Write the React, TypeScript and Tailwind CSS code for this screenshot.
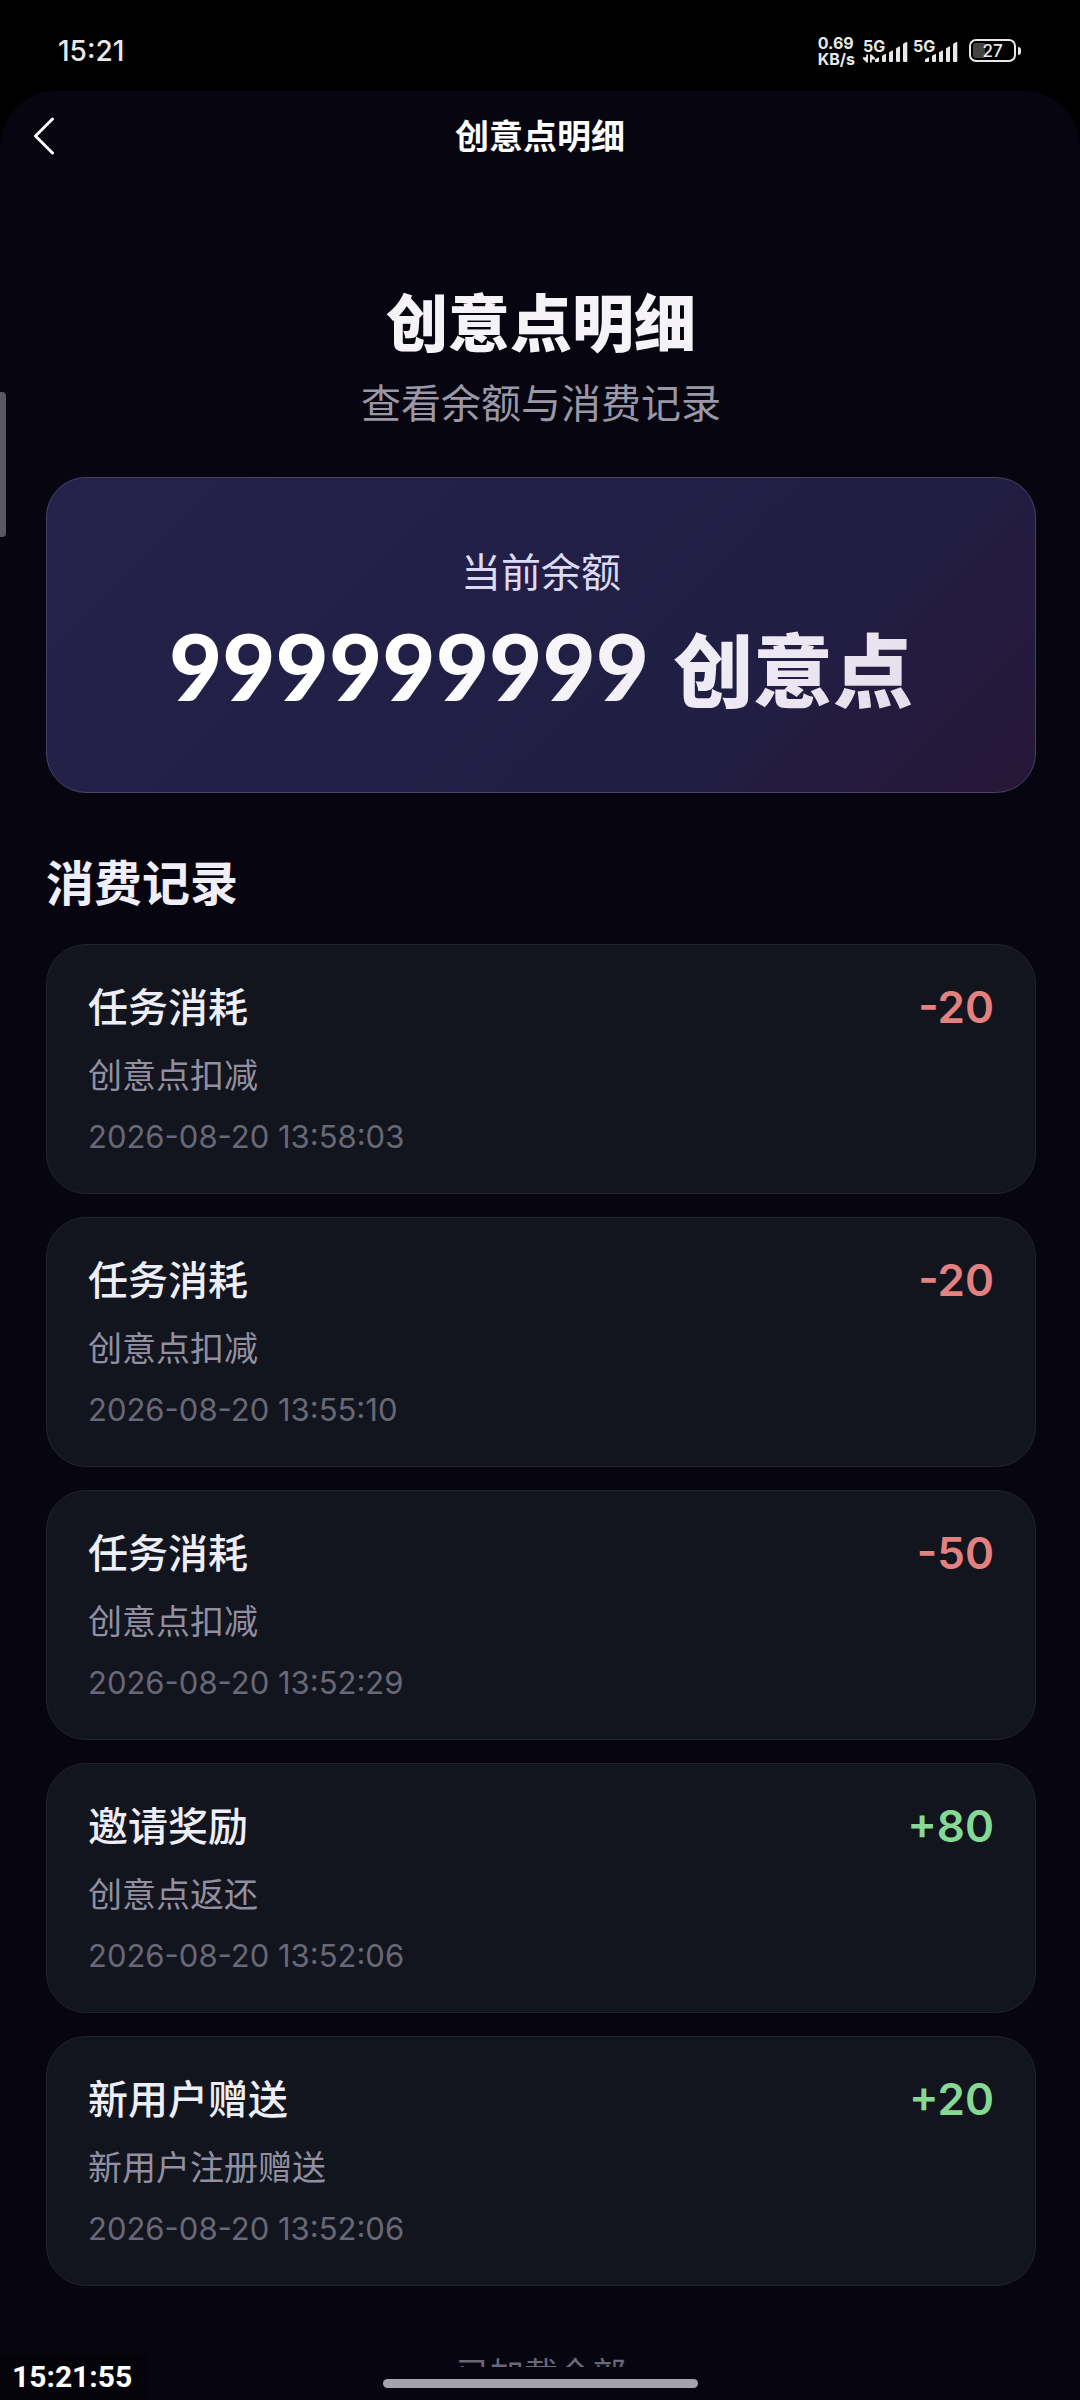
import clsx from "clsx";

type RecordType = {
  id: number;
  title: string;
  desc: string;
  time: string;
  amount: number;
};

const records: RecordType[] = [
  { id: 1, title: "任务消耗", desc: "创意点扣减", time: "2026-08-20 13:58:03", amount: -20 },
  { id: 2, title: "任务消耗", desc: "创意点扣减", time: "2026-08-20 13:55:10", amount: -20 },
  { id: 3, title: "任务消耗", desc: "创意点扣减", time: "2026-08-20 13:52:29", amount: -50 },
  { id: 4, title: "邀请奖励", desc: "创意点返还", time: "2026-08-20 13:52:06", amount: 80 },
  { id: 5, title: "新用户赠送", desc: "新用户注册赠送", time: "2026-08-20 13:52:06", amount: 20 },
];

function Signal({ withData }: { withData?: boolean }) {
  return (
    <div className="relative h-6 w-[50px]">
      <span className="absolute left-0 top-0 text-[16px] leading-[14px] font-bold">5G</span>
      <svg viewBox="0 0 49 24" className="h-6 w-[49px]" fill="currentColor">
        {withData && (
          <path d="M3.2 15.5h1.8v8H3.600L-.2 19.800v-1.600h3.400zM7 15.500h1.600l3.400 3.400v1.600H8.800v3H7z" />
        )}
        <path d="M12 23v-2.200q0-.6.5-.9l2.700-1.500q.8-.4.8.5V22q0 1-1 1z" />
        <path d="M19 22v-4.600q0-.6.5-.9l2.700-1.500q.8-.4.8.5V22q0 1-1 1h-2q-1 0-1-1z" />
        <path d="M26 22v-8.100q0-.6.5-.9l2.700-1.500q.8-.4.8.5V22q0 1-1 1h-2q-1 0-1-1z" />
        <path d="M33 22V10q0-.6.5-.9l2.700-1.500q.8-.4.8.5V22q0 1-1 1h-2q-1 0-1-1z" />
        <path d="M40 22V5.500q0-.6.5-.9l3-1.600q.8-.4.8.5V22q0 1-1 1h-2.300q-1 0-1-1z" />
      </svg>
    </div>
  );
}

function Battery({ level }: { level: number }) {
  return (
    <div className="flex items-center gap-0.5">
      <div className="relative flex h-[23px] w-[47px] items-center justify-center rounded-[7px] border-2 border-[#e8e8e8]">
        <div className="absolute inset-y-0.5 left-0.5 w-3 rounded-l-[3px] bg-[#444444]" />
        <span className="relative text-[17px] leading-5 font-medium">{level}</span>
      </div>
      <div className="h-2 w-[3px] rounded-r-sm bg-[#e8e8e8]" />
    </div>
  );
}

function StatusBar() {
  return (
    <div className="flex h-[91px] shrink-0 items-center justify-between bg-black pt-5 pr-[59px] pb-2.5 pl-[58px] font-['Inter','Noto_Sans_CJK_SC',sans-serif] text-[#e8e8e8]">
      <span className="text-[28px] leading-[28px] font-medium">15:21</span>
      <div className="flex items-center">
        <div className="mr-2 flex flex-col text-[16px] leading-4 font-bold">
          <span>0.69</span>
          <span>KB/s</span>
        </div>
        <Signal withData />
        <Signal />
        <div className="ml-1.5">
          <Battery level={27} />
        </div>
      </div>
    </div>
  );
}

function RecordCard({ record }: { record: RecordType }) {
  const isIncome = record.amount > 0;

  return (
    <li className="flex items-start justify-between rounded-[40px] border border-[#23242b] bg-[#12151d] px-[41px] py-[36px]">
      <div>
        <h3 className="text-[40px] leading-[48px] font-medium text-[#edeef8]">{record.title}</h3>
        <p className="mt-[23px] text-[34px] leading-[44px] text-[#928fa1]">{record.desc}</p>
        <time className="mt-[21px] block font-['Inter',sans-serif] text-[31px] leading-10 text-[#696876]">{record.time}</time>
      </div>
      <span
        className={clsx(
          "pt-0.5 font-['Inter',sans-serif] text-[44px] leading-[48px] font-semibold",
          isIncome ? "text-[#86d995]" : "text-[#e38080]"
        )}
      >
        {isIncome ? `+${record.amount}` : record.amount}
      </span>
    </li>
  );
}

export default function App() {
  return (
    <div className="relative flex h-screen flex-col overflow-hidden bg-black font-['Noto_Sans_CJK_SC',sans-serif] text-white">
      <StatusBar />

      <div className="flex min-h-0 flex-1 flex-col rounded-t-[56px] bg-[#070510]">
        <header className="grid h-[88px] shrink-0 grid-cols-[1fr_auto_1fr] items-center px-6">
          <button aria-label="返回" className="flex size-10 items-center justify-center">
            <svg viewBox="0 0 40 40" className="size-10" fill="none" stroke="currentColor" strokeWidth="3" strokeLinecap="round" strokeLinejoin="round">
              <path d="M28.500 4L11.500 21l17 17" />
            </svg>
          </button>
          <span className="text-[34px] leading-[44px] font-bold">创意点明细</span>
        </header>

        <main className="min-h-0 flex-1 overflow-hidden pr-[44px] pl-[46px]">
          <div className="pt-[105px] text-center">
            <h1 className="text-[62px] leading-[72px] font-black text-[#f5f3f7]">创意点明细</h1>
            <p className="mt-[17px] text-[40px] leading-[56px] text-[#9a97a6]">查看余额与消费记录</p>
          </div>

          {/* Balance */}
          <section className="mt-12 rounded-[40px] border border-[#464362] bg-linear-135 from-[#25224b] via-[#211e44] via-70% to-[#271636] pt-16 pb-[78px] text-center">
            <p className="text-[40px] leading-[56px] text-[#dcdaf4]">当前余额</p>
            <p className="mt-5 flex items-baseline justify-center">
              <span className="flex items-baseline gap-6 bg-linear-135 from-white from-30% to-[#e4ddec] bg-clip-text leading-[96px] font-black text-transparent">
                <span className="font-['Lato',sans-serif] text-[92px] leading-[96px]">999999999</span>
                <span className="text-[80px] leading-[96px]">创意点</span>
              </span>
            </p>
          </section>

          {/* Records */}
          <h2 className="mt-[57px] text-[48px] leading-[60px] font-bold text-[#f0eef8]">消费记录</h2>
          <ul className="mt-[34px] flex flex-col gap-[23px]">
            {records.map(record => (
              <RecordCard key={record.id} record={record} />
            ))}
          </ul>

          <p className="mt-[65px] text-center text-[34px] leading-[44px] text-[#696876]">已加载全部</p>
        </main>

        {/* Home indicator */}
        <div className="flex h-[33px] shrink-0 justify-center pt-3">
          <div className="h-[9px] w-[315px] rounded-full bg-[#a5a2ae]" />
        </div>
      </div>

      <div className="absolute top-[392px] left-0 h-[145px] w-1.5 rounded-r-[4px] bg-[#5a5860]" />
      <div className="absolute bottom-0 left-0 bg-[#05040a] pt-1 pr-4 pb-1 pl-3 font-['Roboto',sans-serif] text-[30px] leading-[38px] font-bold">
        15:21:55
      </div>
    </div>
  );
}
